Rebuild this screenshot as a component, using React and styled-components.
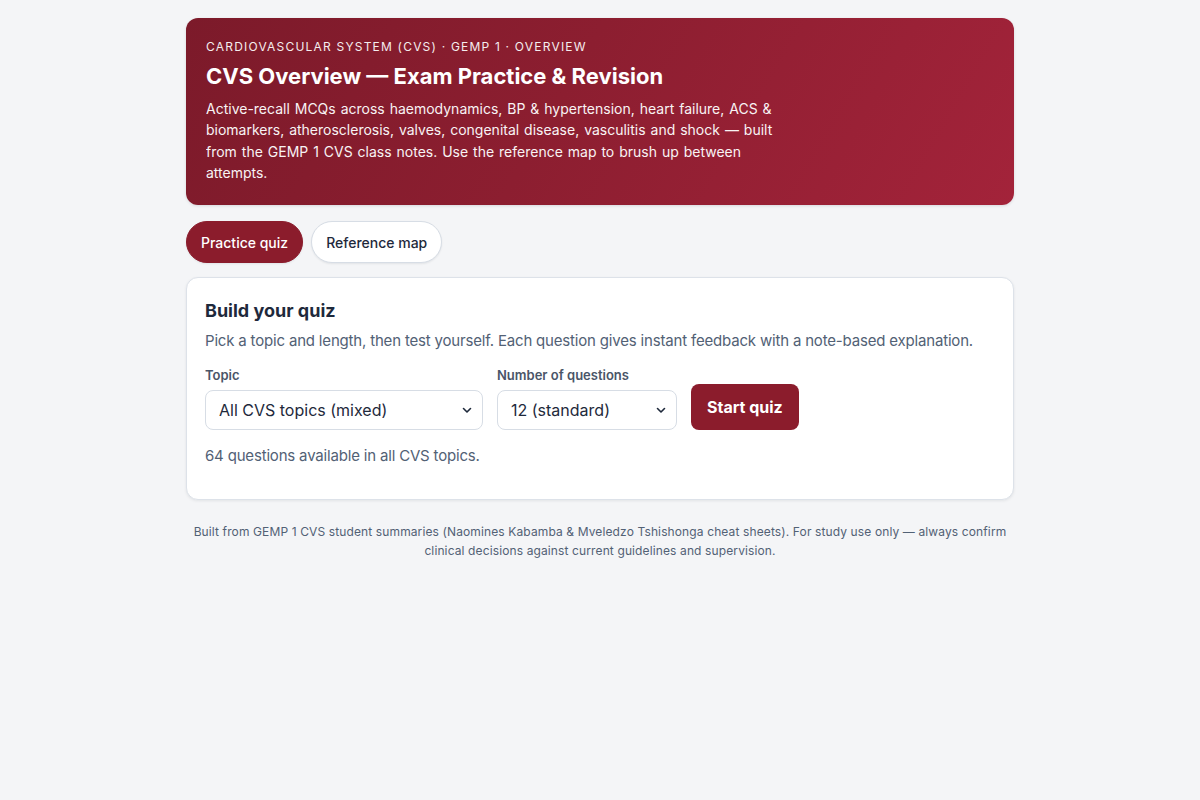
import React from "react";
import styled, { createGlobalStyle } from "styled-components";

const Global = createGlobalStyle`
  html, body { margin: 0; padding: 0; background: #f4f5f7; }
  body { font-family: Inter, "Noto Sans", sans-serif; color: #1e293b; -webkit-font-smoothing: antialiased; }
  * { box-sizing: border-box; }
`;

const Page = styled.main`
  width: 828px;
  margin: 0 auto;
  padding: 18px 0 40px;
  display: flex;
  flex-direction: column;
`;

const Hero = styled.header`
  background: linear-gradient(120deg, #7c1a2a 0%, #8c1e30 45%, #a3233a 100%);
  color: #fff;
  border-radius: 12px;
  padding: 22px 20px 22px;
  box-shadow: 0 1px 3px rgba(15, 23, 42, 0.12);
`;

const Eyebrow = styled.div`
  font-size: 12px;
  letter-spacing: 0.1em;
  text-transform: uppercase;
  opacity: 0.92;
  line-height: 14px;
`;

const Title = styled.h1`
  margin: 8px 0 0;
  font-size: 22px;
  font-weight: 700;
  line-height: 28px;
`;

const Lead = styled.p`
  margin: 8px 0 0;
  font-size: 14px;
  line-height: 21.3px;
  word-spacing: 1px;
  max-width: 598px;
  opacity: 0.95;
`;

const Tabs = styled.nav`
  display: flex;
  gap: 8px;
  margin-top: 16px;
`;

const Tab = styled.button`
  height: 42px;
  padding: 0 14px;
  border-radius: 999px;
  font-family: inherit;
  font-size: 14px;
  font-weight: 500;
  cursor: pointer;
  border: 1px solid ${p => (p.$active ? "#8b1c2c" : "#d7dde5")};
  background: ${p => (p.$active ? "#8b1c2c" : "#fff")};
  color: ${p => (p.$active ? "#fff" : "#1e293b")};
  box-shadow: 0 1px 2px rgba(15, 23, 42, 0.08);
`;

const Card = styled.section`
  margin-top: 14px;
  background: #fff;
  border: 1px solid #dde2e9;
  border-radius: 12px;
  padding: 21px 18px 33px;
  box-shadow: 0 1px 3px rgba(15, 23, 42, 0.08);
`;

const CardTitle = styled.h2`
  margin: 0;
  font-size: 18px;
  font-weight: 700;
  line-height: 24px;
  color: #1e293b;
`;

const Muted = styled.p`
  margin: ${p => p.$top || "8px"} 0 0;
  font-size: 15px;
  line-height: 20px;
  letter-spacing: -0.012em;
  color: #526175;
`;

const Controls = styled.div`
  display: flex;
  align-items: flex-end;
  gap: 14px;
  margin-top: 16px;
`;

const Field = styled.label`
  display: flex;
  flex-direction: column;
  gap: 7px;
  width: ${p => p.$w}px;
`;

const Label = styled.span`
  font-size: 13px;
  font-weight: 600;
  line-height: 16px;
  color: #4a5568;
`;

const Select = styled.select`
  height: 40px;
  width: 100%;
  border: 1px solid #d7dde5;
  border-radius: 8px;
  background: #fff;
  font-family: inherit;
  font-size: 16px;
  color: #1e293b;
  padding: 0 10px 0 13px;
  appearance: none;
  background-image: url("data:image/svg+xml,%3Csvg xmlns='http://www.w3.org/2000/svg' width='10' height='10' viewBox='0 0 10 10'%3E%3Cpath d='M1.5 3.5 5 7l3.5-3.5' fill='none' stroke='%231e293b' stroke-width='1.6' stroke-linecap='round' stroke-linejoin='round'/%3E%3C/svg%3E");
  background-repeat: no-repeat;
  background-position: right 10px center;
`;

const Primary = styled.button`
  height: 46px;
  padding: 0 16px;
  border: none;
  border-radius: 8px;
  background: #8b1c2c;
  color: #fff;
  font-family: inherit;
  font-size: 16px;
  font-weight: 700;
  cursor: pointer;
`;

const Footer = styled.footer`
  margin-top: 22px;
  text-align: center;
  font-size: 12px;
  line-height: 19px;
  letter-spacing: 0.01em;
  color: #526175;
  padding: 0 4px;
`;

export default function App() {
  return (
    <>
      <Global />
      <Page>
        <Hero>
          <Eyebrow>Cardiovascular System (CVS) · GEMP 1 · Overview</Eyebrow>
          <Title>CVS Overview — Exam Practice &amp; Revision</Title>
          <Lead>
            Active-recall MCQs across haemodynamics, BP &amp; hypertension, heart failure, ACS &amp;
            biomarkers, atherosclerosis, valves, congenital disease, vasculitis and shock — built
            from the GEMP 1 CVS class notes. Use the reference map to brush up between
            attempts.
          </Lead>
        </Hero>
        <Tabs>
          <Tab $active>Practice quiz</Tab>
          <Tab>Reference map</Tab>
        </Tabs>
        <Card>
          <CardTitle>Build your quiz</CardTitle>
          <Muted>
            Pick a topic and length, then test yourself. Each question gives instant feedback with a
            note-based explanation.
          </Muted>
          <Controls>
            <Field $w={278}>
              <Label>Topic</Label>
              <Select defaultValue="all">
                <option value="all">All CVS topics (mixed)</option>
              </Select>
            </Field>
            <Field $w={180}>
              <Label>Number of questions</Label>
              <Select defaultValue="12">
                <option value="12">12 (standard)</option>
              </Select>
            </Field>
            <Primary>Start quiz</Primary>
          </Controls>
          <Muted $top="16px">64 questions available in all CVS topics.</Muted>
        </Card>
        <Footer>
          Built from GEMP 1 CVS student summaries (Naomines Kabamba &amp; Mveledzo Tshishonga cheat
          sheets). For study use only — always confirm clinical decisions against current guidelines
          and supervision.
        </Footer>
      </Page>
    </>
  );
}
